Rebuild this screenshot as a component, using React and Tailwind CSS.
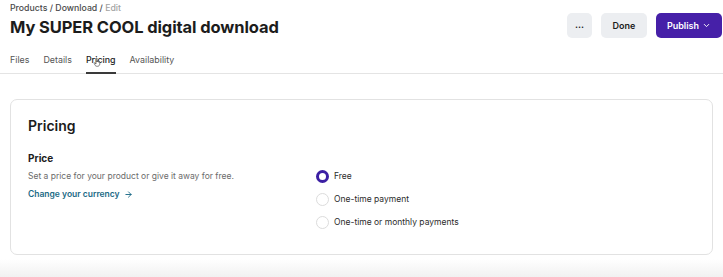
import { ChevronDown, ArrowRight } from 'lucide-react';

const font = { fontFamily: 'Inter, "Noto Sans", sans-serif' };

function Radio({ checked, label }) {
    return (
        <label className="flex items-center gap-[5px] text-[8.5px] leading-[13px] text-[#2b2b2b]">
            {checked ? (
                <span className="w-[13px] h-[13px] rounded-full border-[3.5px] border-[#3b1fa3] bg-white" />
            ) : (
                <span className="w-[13px] h-[13px] rounded-full border border-[#dcdcdc] bg-white" />
            )}
            {label}
        </label>
    );
}

export default function App() {
    const tabs = ['Files', 'Details', 'Pricing', 'Availability'];

    return (
        <div className="w-[723px] h-[277px] bg-white overflow-hidden flex flex-col text-[#1c1c1c]" style={font}>
            <header className="flex justify-between items-start pl-[10px] pr-[1px] pt-[2px]">
                <div>
                    <div className="text-[8.75px] text-[#4a4a4a] font-medium leading-[12px]">
                        Products / Download / <span className="text-[#a3a3a3]">Edit</span>
                    </div>
                    <h1 className="text-[16.5px] font-bold tracking-[-0.1px] leading-[22px] mt-[2px]">
                        My SUPER COOL digital download
                    </h1>
                </div>
                <div className="flex items-center gap-[9px] mt-[11px]">
                    <button className="w-[25px] h-[25px] rounded-[5px] bg-[#eceef1] text-[9px] font-bold leading-none pb-[3px]">
                        ...
                    </button>
                    <button className="w-[46px] h-[25px] rounded-[5px] bg-[#eceef1] text-[9px] font-semibold">
                        Done
                    </button>
                    <button className="w-[66px] h-[25px] rounded-[5px] bg-[#4620a8] text-white text-[9px] font-semibold flex items-center justify-center gap-[3px]">
                        Publish <ChevronDown size={9} strokeWidth={2.5} />
                    </button>
                </div>
            </header>

            <nav className="flex gap-[14px] pl-[10px] mt-[16px] border-b border-[#e4e4e4] text-[8.9px] leading-[12px] text-[#555]">
                {tabs.map((t) => (
                    <div
                        key={t}
                        className={
                            t === 'Pricing'
                                ? 'relative pb-[6px] text-[#1c1c1c] font-medium border-b-2 border-[#3a3a3a] -mb-px'
                                : 'pb-[7px]'
                        }
                    >
                        {t}
                        {t === 'Pricing' && (
                            <svg className="absolute left-[7px] top-[3px]" width="9" height="10" viewBox="0 0 9 10">
                                <path
                                    d="M3 1.2c0-.5.9-.5.9 0V5l.1-.9c0-.5.9-.5.9 0V5l.1-.6c0-.5.9-.5.9 0v1l.1-.4c0-.5.8-.5.8 0V7c0 1.3-1 2.3-2.3 2.3h-.6c-.8 0-1.4-.4-1.8-1L1.2 6.4c-.3-.5.3-.9.7-.5L3 7V1.2z"
                                    fill="white"
                                    stroke="#333"
                                    strokeWidth="0.6"
                                />
                            </svg>
                        )}
                    </div>
                ))}
            </nav>

            <main className="px-[10px] pt-[25px] pb-[4px]">
                <section className="h-[156px] rounded-[7px] border border-[#e2e2e2] pl-[17px] pr-[20px] pt-[16px]">
                    <h2 className="text-[14px] font-semibold leading-[20px]">Pricing</h2>
                    <div className="flex mt-[15px]">
                        <div className="w-[288px]">
                            <div className="text-[10px] font-bold leading-[14px]">Price</div>
                            <p className="text-[8.5px] text-[#6b6b6b] mt-[5px] leading-[12px]">
                                Set a price for your product or give it away for free.
                            </p>
                            <a className="flex items-center gap-[4px] text-[8.5px] font-semibold text-[#1b6a86] mt-[6px] leading-[12px]">
                                Change your currency <ArrowRight size={9} strokeWidth={2.5} />
                            </a>
                        </div>
                        <div className="flex flex-col gap-[10px] pt-[19px]">
                            <Radio checked label="Free" />
                            <Radio label="One-time payment" />
                            <Radio label="One-time or monthly payments" />
                        </div>
                    </div>
                </section>
            </main>
            <div className="flex-1 bg-gradient-to-b from-white to-[#f1f1f1]" />
        </div>
    );
}
